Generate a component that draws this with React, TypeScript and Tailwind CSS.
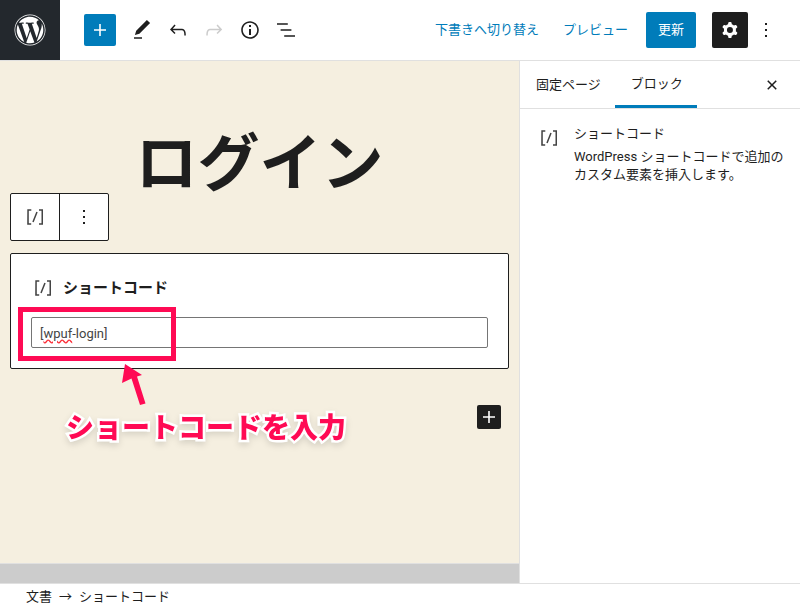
import type { ReactNode } from "react";
import { FaWordpress } from "react-icons/fa";

const icons = {
  plus: "M18 11.2h-5.2V6h-1.6v5.2H6v1.6h5.2V18h1.6v-5.2H18z",
  edit: "M20.1 5.1L16.9 2 6.2 12.7l-1.3 4.4 4.5-1.3L20.1 5.1zM4 20.8h8v-1.5H4v1.5z",
  undo: "M18.3 11.7c-.6-.6-1.4-.9-2.3-.9H6.7l2.9-3.3-1.1-1-4.5 5L8.5 16l1-1-2.7-2.7H16c.5 0 .9.2 1.3.5 1 1 1 3.4 1 4.5v.3h1.5v-.2c0-1.5 0-4.3-1.5-5.7z",
  redo: "M15.6 6.5l-1.1 1 2.9 3.3H8c-.9 0-1.7.3-2.3.9-1.4 1.5-1.4 4.2-1.4 5.6v.2h1.5v-.3c0-1.1 0-3.5 1-4.5.3-.3.7-.5 1.3-.5h9.2L14.5 15l1.1 1.1 4.6-4.6-4.6-5z",
  info: "M12 3.2c-4.8 0-8.8 3.9-8.8 8.8 0 4.8 3.9 8.8 8.8 8.8 4.8 0 8.8-3.9 8.8-8.8 0-4.8-4-8.8-8.8-8.8zm0 16c-4 0-7.2-3.3-7.2-7.2C4.8 8 8 4.8 12 4.8s7.2 3.3 7.2 7.2c0 4-3.2 7.2-7.2 7.2zM11 17h2v-6h-2v6zm0-8h2V7h-2v2z",
  list: "M13.8 5.2H3v1.5h10.8V5.2zm-3.6 12v1.5H21v-1.5H10.2zm7.2-6H6.6v1.5h10.8v-1.5z",
  cog: "M10.289 4.836A1 1 0 0111.275 4h1.306a1 1 0 01.987.836l.244 1.466c.787.26 1.503.679 2.108 1.218l1.393-.522a1 1 0 011.216.437l.653 1.13a1 1 0 01-.23 1.273l-1.148.944a6.025 6.025 0 010 2.435l1.149.946a1 1 0 01.23 1.272l-.653 1.13a1 1 0 01-1.216.437l-1.394-.522c-.605.54-1.32.958-2.108 1.218l-.244 1.466a1 1 0 01-.987.836h-1.306a1 1 0 01-.986-.836l-.244-1.466a5.995 5.995 0 01-2.108-1.218l-1.394.522a1 1 0 01-1.217-.436l-.653-1.131a1 1 0 01.23-1.272l1.149-.946a6.026 6.026 0 010-2.435l-1.148-.944a1 1 0 01-.23-1.272l.653-1.131a1 1 0 011.217-.437l1.393.522a5.994 5.994 0 012.108-1.218l.244-1.466zM14.929 12a3 3 0 11-6 0 3 3 0 016 0z",
  more: "M13 19h-2v-2h2v2zm0-6h-2v-2h2v2zm0-6h-2V5h2v2z",
  close: "M12 13.06l3.712 3.713 1.061-1.06L13.061 12l3.712-3.712-1.06-1.06L12 10.938 8.288 7.227l-1.061 1.06L10.939 12l-3.712 3.712 1.06 1.061L12 13.061z",
  shortcode: "M16 4.2v1.5h2.5v12.5H16v1.5h4V4.2h-4zM4.2 19.8h4v-1.5H5.8V5.8h2.5V4.2h-4l-.1 15.6zm5.1-3.1l1.4.6 4-10-1.4-.6-4 10z",
};

function Icon({ name, className }: { name: keyof typeof icons; className?: string }) {
  return (
    <svg viewBox="0 0 24 24" className={className ?? "h-6 w-6"} fill="currentColor" fillRule="evenodd">
      <path d={icons[name]} />
    </svg>
  );
}

function ToolButton({ children }: { children: ReactNode }) {
  return <div className="flex h-9 w-9 items-center justify-center text-[#1e1e1e]">{children}</div>;
}

function Header() {
  return (
    <header className="flex h-[61px] shrink-0 items-center border-b border-[#e0e0e0] bg-white">
      <div className="flex h-full w-15 items-center justify-center bg-[#23282d] text-white">
        <FaWordpress className="h-8 w-8" />
      </div>
      <div className="ml-6 mr-2 flex h-8 w-8 items-center justify-center rounded-xs bg-[#007cba] text-white">
        <Icon name="plus" />
      </div>
      <ToolButton><Icon name="edit" /></ToolButton>
      <ToolButton><Icon name="undo" /></ToolButton>
      <ToolButton><Icon name="redo" className="h-6 w-6 text-[#ccc]" /></ToolButton>
      <ToolButton><Icon name="info" /></ToolButton>
      <ToolButton><Icon name="list" /></ToolButton>
      <div className="ml-auto flex items-center">
        <span className="text-[#007cba]">下書きへ切り替え</span>
        <span className="ml-6 text-[#007cba]">プレビュー</span>
        <div className="ml-4.5 flex h-9 w-12.5 items-center justify-center rounded-xs bg-[#007cba] text-white">更新</div>
        <div className="ml-4 flex h-9 w-9 items-center justify-center rounded-xs bg-[#1e1e1e] text-white">
          <Icon name="cog" />
        </div>
        <div className="mr-4 flex h-9 w-9 items-center justify-center">
          <Icon name="more" />
        </div>
      </div>
    </header>
  );
}

function Canvas() {
  return (
    <main className="relative flex min-w-0 flex-1 flex-col bg-[#f5efe0]">
      <div className="relative flex h-48 shrink-0 items-center justify-center pt-4">
        <h1 className="text-[62px] leading-none font-bold text-[#1e1e1e]">ログイン</h1>
        <div className="absolute bottom-3 left-2.5 flex h-12 rounded-xs border border-[#1e1e1e] bg-white">
          <div className="flex w-12.25 items-center justify-center border-r border-[#1e1e1e]">
            <Icon name="shortcode" className="h-6 w-6 text-[#444]" />
          </div>
          <div className="flex w-12 items-center justify-center">
            <Icon name="more" />
          </div>
        </div>
      </div>

      <section className="mx-2.5 h-29 rounded-xs border border-[#1e1e1e] bg-white px-5 pt-5">
        <div className="mb-3.75 flex h-7 items-center gap-2 text-[15px] font-bold">
          <Icon name="shortcode" className="h-6 w-6 text-[#444]" />
          <span>ショートコード</span>
        </div>
        <div className="flex h-7.75 items-center rounded-xs border border-[#757575] px-2 pt-0.5 text-[#444]">
          <span>
            [<span className="underline decoration-red-500 decoration-wavy">wpuf</span>-login]
          </span>
        </div>
      </section>

      <div className="mt-9 flex justify-end pr-4.5">
        <div className="flex h-6 w-6 items-center justify-center rounded-xs bg-[#1e1e1e] text-white">
          <Icon name="plus" />
        </div>
      </div>

      <div className="mt-auto h-5 border-t border-[#e0e0e0] bg-[#ccc]" />

      {/* annotation painted over the screenshot */}
      <div className="absolute top-61.5 left-4.5 h-13.5 w-39.5 border-5 border-[#ff0a54]" />
      <svg className="absolute top-75 left-30 h-12 w-10" viewBox="0 0 40 48">
        <path d="M5 3 L2 22 L11.5 17.5 L20 44 L25.5 42.5 L17 15.5 L22 14 Z" fill="#ff0a54" />
      </svg>
      <div className="absolute top-88.5 left-16.5 text-[28px] leading-none font-black whitespace-nowrap text-[#ff0a54] drop-shadow-md [-webkit-text-stroke:5px_white] [paint-order:stroke_fill]">
        ショートコードを入力
      </div>
    </main>
  );
}

function Sidebar() {
  return (
    <aside className="flex w-[281px] shrink-0 flex-col border-l border-[#e0e0e0] bg-white">
      <div className="flex h-12 shrink-0 items-center border-b border-[#e0e0e0]">
        <div className="flex h-full items-center pr-3.5 pl-4">固定ページ</div>
        <div className="flex h-full items-center border-b-3 border-[#007cba] pt-0.5 pr-3.5 pl-4">ブロック</div>
        <div className="mr-2.5 ml-auto flex h-9 w-9 items-center justify-center">
          <Icon name="close" />
        </div>
      </div>
      <div className="flex gap-3.25 pt-3.75 pr-4 pl-4.25">
        <Icon name="shortcode" className="mt-0.5 h-6 w-6 shrink-0 text-[#444]" />
        <div>
          <div className="mb-1 leading-5">ショートコード</div>
          <p className="leading-[18px]">WordPress ショートコードで追加のカスタム要素を挿入します。</p>
        </div>
      </div>
    </aside>
  );
}

export default function App() {
  return (
    <div className="flex h-[608px] w-[800px] flex-col overflow-hidden bg-white font-['Roboto','Noto_Sans_CJK_JP',sans-serif] text-[13px] text-[#1e1e1e]">
      <Header />
      <div className="flex min-h-0 flex-1">
        <Canvas />
        <Sidebar />
      </div>
      <footer className="flex h-6.25 shrink-0 items-center gap-1.75 border-t border-[#e0e0e0] bg-white pl-6.5 leading-none">
        <span>文書</span>
        <span>→</span>
        <span>ショートコード</span>
      </footer>
    </div>
  );
}
